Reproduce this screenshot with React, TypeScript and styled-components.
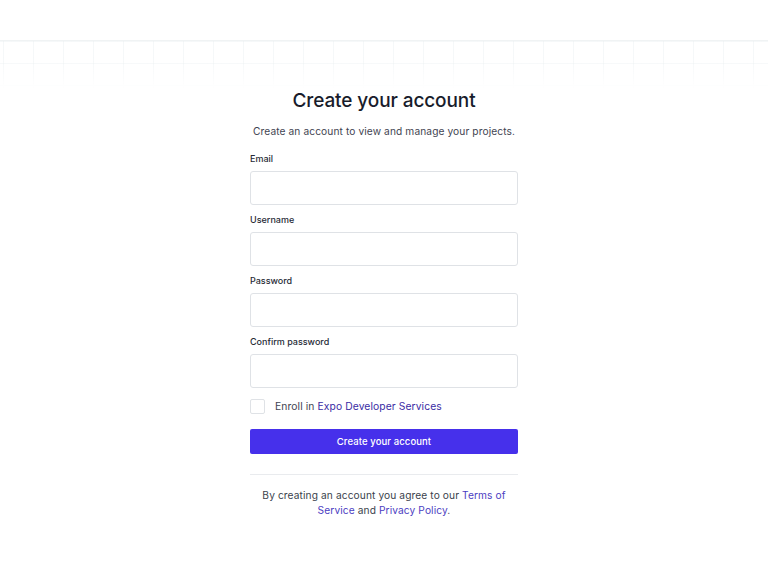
import React from "react";
import styled, { createGlobalStyle } from "styled-components";

const GlobalStyle = createGlobalStyle`
  html, body { margin: 0; padding: 0; background: #ffffff; }
  body { font-family: Inter, "Noto Sans", "Liberation Sans", sans-serif; color: #1b1f2e; -webkit-font-smoothing: antialiased; }
  * { box-sizing: border-box; }
`;

const Page = styled.div`
  width: 768px;
  min-height: 584px;
  display: flex;
  flex-direction: column;
  align-items: stretch;
`;

const Header = styled.header`
  height: 41px;
  border-bottom: 1px solid #f0f3f4;
  background: #fff;
`;

const GridBand = styled.div`
  height: 48px;
  background-image:
    linear-gradient(to right, rgba(236, 241, 243, 0.5) 1px, transparent 1px),
    linear-gradient(to bottom, rgba(236, 241, 243, 0.5) 1px, transparent 1px);
  background-size: 30px 22px;
  background-position: 3px 0;
  -webkit-mask-image: linear-gradient(to bottom, #000 40%, transparent 100%);
  mask-image: linear-gradient(to bottom, #000 40%, transparent 100%);
`;

const Main = styled.main`
  display: flex;
  justify-content: center;
  margin-top: -1px;
`;

const Form = styled.form`
  width: 268px;
  display: flex;
  flex-direction: column;
`;

const Title = styled.h1`
  margin: 0;
  text-align: center;
  font-size: 19px;
  line-height: 26px;
  font-weight: 500;
  color: #181c2b;
  letter-spacing: -0.1px;
`;

const Subtitle = styled.p`
  margin: 9px -20px 0;
  text-align: center;
  white-space: nowrap;
  font-size: 10.2px;
  line-height: 16px;
  color: #3f4452;
  letter-spacing: 0.1px;
`;

const Field = styled.div<{ $first?: boolean }>`
  display: flex;
  flex-direction: column;
  margin-top: ${(p) => (p.$first ? "14px" : "9px")};
`;

const Label = styled.label`
  font-size: 9px;
  line-height: 12px;
  font-weight: 500;
  color: #272b36;
  margin-bottom: 6px;
`;

const Input = styled.input`
  height: 34px;
  width: 100%;
  border: 1px solid #dfe2e6;
  border-radius: 3px;
  background: #fff;
  font: inherit;
  font-size: 12px;
  padding: 0 10px;
  outline: none;
`;

const CheckRow = styled.label`
  display: flex;
  align-items: center;
  gap: 10px;
  margin-top: 10px;
  font-size: 10.3px;
  line-height: 16px;
  color: #3f4452;
  letter-spacing: 0.1px;
`;

const Box = styled.span`
  width: 15px;
  height: 15px;
  border: 1px solid #dfe2e6;
  border-radius: 2px;
  background: #fff;
  flex: none;
`;

const Link = styled.a`
  color: #3a2ca4;
  text-decoration: none;
`;

const Button = styled.button`
  margin-top: 15px;
  height: 25px;
  width: 100%;
  border: none;
  border-radius: 2px;
  background: #4630eb;
  color: #fff;
  font: inherit;
  font-size: 9.5px;
  font-weight: 500;
  letter-spacing: 0.1px;
  cursor: pointer;
`;

const Divider = styled.hr`
  margin: 20px 0 0;
  border: none;
  border-top: 1px solid #e9ebee;
`;

const Footer = styled.p`
  margin: 13px 0 0;
  text-align: center;
  font-size: 10.2px;
  line-height: 15px;
  color: #3a3f4c;
  letter-spacing: 0.1px;
  padding: 0;
`;

const FooterLink = styled.a`
  color: #4b3dc2;
  text-decoration: none;
`;

export default function App() {
  return (
    <>
      <GlobalStyle />
      <Page>
        <Header />
        <GridBand />
        <Main>
          <Form onSubmit={(e) => e.preventDefault()}>
            <Title>Create your account</Title>
            <Subtitle>Create an account to view and manage your projects.</Subtitle>
            <Field $first>
              <Label>Email</Label>
              <Input type="email" />
            </Field>
            <Field>
              <Label>Username</Label>
              <Input type="text" />
            </Field>
            <Field>
              <Label>Password</Label>
              <Input type="password" />
            </Field>
            <Field>
              <Label>Confirm password</Label>
              <Input type="password" />
            </Field>
            <CheckRow>
              <Box />
              <span>
                Enroll in <Link href="#">Expo Developer Services</Link>
              </span>
            </CheckRow>
            <Button type="submit">Create your account</Button>
            <Divider />
            <Footer>
              By creating an account you agree to our{" "}
              <FooterLink href="#">Terms of Service</FooterLink> and{" "}
              <FooterLink href="#">Privacy Policy</FooterLink>.
            </Footer>
          </Form>
        </Main>
      </Page>
    </>
  );
}
